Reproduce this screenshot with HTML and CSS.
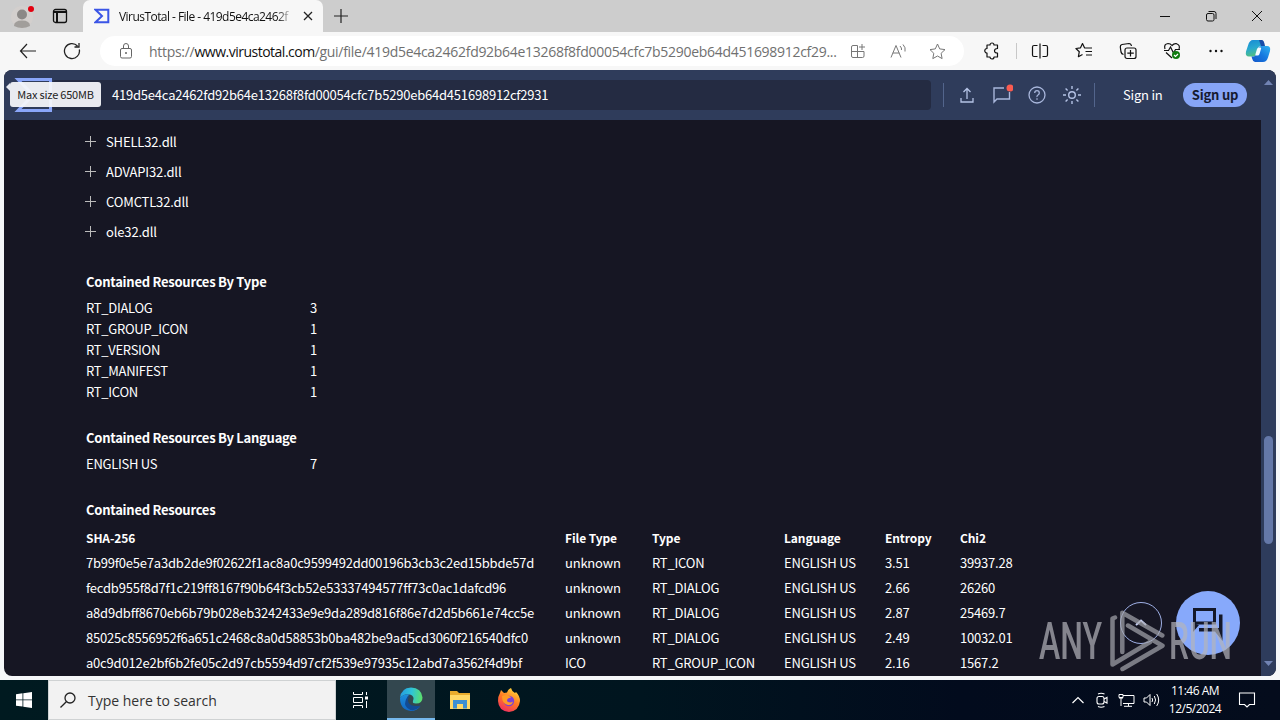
FILE: index.html
```html
<!DOCTYPE html>
<html lang="en">
<head>
    <meta charset="UTF-8">
    <meta name="viewport" content="width=device-width, initial-scale=1.0">
    <title>VirusTotal - File</title>
    <link rel="stylesheet" href="styles.css">
</head>
<body>

    <div class="tabbar">
        <div class="tab-tools">
            <svg class="profile" width="24" height="28" viewBox="0 0 24 28">
                <circle cx="12" cy="15" r="11" fill="#d3cfcd"/>
                <circle cx="12" cy="12.500" r="5" fill="#8b8886"/>
                <path d="M4 24q0-5.500 8-5.500t8 5.500q-8 4-16 0z" fill="#a19e9b"/>
                <circle cx="21" cy="7" r="3" fill="#e3000f"/>
            </svg>
            <svg width="16" height="16" viewBox="0 0 16 16" fill="none" stroke="#111" stroke-width="1.300">
                <rect x="1.500" y="1.500" width="13" height="13" rx="2"/>
                <path d="M1.500 4h13M5 4v10.500" stroke-width="2"/>
            </svg>
        </div>
        <div class="tab">
            <svg width="16" height="16" viewBox="0 0 16 16" fill="none" stroke="#3b55e6" stroke-width="2">
                <path d="M1.500 1.700h12.800v12.600H1.500L8 8z"/>
            </svg>
            <span class="tab-title">VirusTotal - File - 419d5e4ca2462f</span>
            <svg width="10" height="10" viewBox="0 0 10 10" stroke="#222" stroke-width="1.300"><path d="M1 1l8 8M9 1l-8 8"/></svg>
        </div>
        <svg class="new-tab" width="14" height="14" viewBox="0 0 14 14" stroke="#222" stroke-width="1.200"><path d="M7 0v14M0 7h14"/></svg>
        <div class="window-buttons">
            <svg width="12" height="12" viewBox="0 0 12 12" stroke="#111"><path d="M1 6.500h10"/></svg>
            <svg width="12" height="12" viewBox="0 0 12 12" fill="none" stroke="#111"><rect x="1.500" y="3.500" width="7.500" height="7.500" rx="1.500"/><path d="M3.500 1.500H9a2 2 0 0 1 2 2V9"/></svg>
            <svg width="12" height="12" viewBox="0 0 12 12" stroke="#111"><path d="M1 1l10 10M11 1L1 11"/></svg>
        </div>
    </div>

    <div class="toolbar">
        <svg class="back" width="18" height="16" viewBox="0 0 18 16" fill="none" stroke="#222" stroke-width="1.200"><path d="M17 8H1.500M8 1L1.500 8 8 15"/></svg>
        <svg class="reload" width="18" height="18" viewBox="0 0 18 18" fill="none" stroke="#222" stroke-width="1.300"><path d="M16.300 7.500A7.500 7.500 0 1 1 14.500 4M16 1v4h-4.500"/></svg>
        <div class="address">
            <svg width="14" height="18" viewBox="0 0 14 18" fill="none" stroke="#666"><rect x="1.500" y="6.500" width="11" height="9.500" rx="1.500"/><path d="M4.500 6.500V4a2.500 2.500 0 0 1 5 0v2.500"/><circle cx="7" cy="11" r=".6" fill="#666"/></svg>
            <span class="url">https://<b>www.virustotal.com</b>/gui/file/419d5e4ca2462fd92b64e13268f8fd00054cfc7b5290eb64d451698912cf29...</span>
            <svg class="apps" width="16" height="16" viewBox="0 0 16 16" fill="none" stroke="#777"><path d="M7.500 2.500H3A1.500 1.500 0 0 0 1.500 4v9A1.500 1.500 0 0 0 3 14.500h9.500A1.500 1.500 0 0 0 14 13V8.500H1.500M7.500 2.500v12M12 1v6M9 4h6"/></svg>
            <svg class="read" width="18" height="16" viewBox="0 0 18 16" fill="none" stroke="#777"><path d="M1 14.500L6 2.500l5 12M2.800 10h6.500M10 3q2 2 1.500 4M13 1.500q3 3 2 7"/></svg>
            <svg class="star" width="17" height="17" viewBox="0 0 17 17" fill="none" stroke="#777" stroke-linejoin="round"><path d="M8.500 1l2.200 4.900 5.300.7-3.900 3.700 1 5.300-4.600-2.600-4.700 2.600 1-5.300L1 6.600l5.300-.7z"/></svg>
        </div>
        <div class="toolbar-icons">
            <svg width="18" height="18" viewBox="0 0 18 18" fill="none" stroke="#111" stroke-width="1.200" stroke-linejoin="round"><path d="M4 3h3a2 2 0 0 1 4 0h3.500v3.500q-3 0-3 2.300t3 2.200v4H11a2 2 0 0 1-4 0H4v-4a2.200 2.200 0 1 1 0-4.500z"/></svg>
            <i class="divider"></i>
            <svg width="18" height="18" viewBox="0 0 18 18" fill="none" stroke="#111" stroke-width="1.200"><path d="M6.500 3.500H3a1.500 1.500 0 0 0-1.500 1.500v8A1.500 1.500 0 0 0 3 14.500h3.500M11.500 3.500H15a1.500 1.500 0 0 1 1.500 1.500v8a1.500 1.500 0 0 1-1.500 1.500h-3.500M9 1.500v15"/></svg>
            <svg width="18" height="18" viewBox="0 0 18 18" fill="none" stroke="#111" stroke-width="1.200" stroke-linejoin="round"><path d="M12 6L9.500 5.800 7.500 1.500l-2 4.300-4.600.7 3.400 3.200-.9 5L7.500 12.500M10.500 6H17M10.500 9.500H17M11 13h6"/></svg>
            <svg width="18" height="18" viewBox="0 0 18 18" fill="none" stroke="#111" stroke-width="1.200"><rect x="6" y="6" width="11" height="10.500" rx="2"/><path d="M11.500 8v6.500M8.300 11.200h6.500M4.500 12.500Q2.500 12 2 10L1.300 5q-.2-2 1.700-2.500l7-1q2 0 2.500 2.500"/></svg>
            <svg width="18" height="18" viewBox="0 0 18 18" fill="none" stroke="#111" stroke-width="1.200"><path d="M2 7q-1.500-5 3-5.500Q7.500 1.500 9 3.500 11 1.200 13.500 1.700 17.500 3 16 7M1 8.500h4.500l2-3.500 3 6 2-3.500H17M3 10.500l6 5.500"/><circle cx="13" cy="13" r="4" fill="#107c10" stroke="none"/><path d="M11 13l1.500 1.500L15 12" stroke="#fff"/></svg>
            <svg width="18" height="18" viewBox="0 0 18 18" fill="#111"><circle cx="3.500" cy="9" r="1.200"/><circle cx="9" cy="9" r="1.200"/><circle cx="14.500" cy="9" r="1.200"/></svg>
        </div>
        <svg class="copilot" width="26" height="24" viewBox="0 0 26 24">
            <defs>
                <linearGradient id="copilotLeft" x1="0" y1="0" x2=".3" y2="1"><stop offset="0" stop-color="#1689d5"/><stop offset=".55" stop-color="#28a9cf"/><stop offset="1" stop-color="#51bf83"/></linearGradient>
                <linearGradient id="copilotRight" x1="1" y1="0" x2="0" y2="1"><stop offset="0" stop-color="#2fb4f2"/><stop offset=".5" stop-color="#1678df"/><stop offset="1" stop-color="#1456c8"/></linearGradient>
            </defs>
            <path d="M8 1h8q2 0 2.700 3l.8 3h-4q-2 0-2.800 3l-1.500 5q-.8 2.500-3 2.500H4q-4 0-3-5l2-6Q4.500 1 8 1z" fill="url(#copilotLeft)"/>
            <path d="M18 23h-8q-2 0-2.700-3l-.8-2.500h2q2 0 2.800-3L13 9.500Q14 7 16 7h6q4 0 3 5l-2 6.500Q21.500 23 18 23z" fill="url(#copilotRight)"/>
            <path d="M14 8.500h1.500q1 0 .5 1.500l-1.500 5q-.5 1.500-2 1.500h-1.500q-1 0-.5-1.500l1.500-5q.5-1.500 2-1.500z" fill="#f4fbff"/>
            <path d="M14 1h3q2 0 3 6h-4z" fill="#174ca8"/>
        </svg>
    </div>

    <div class="page">
        <div class="main">
            <div class="vt-header">
                <svg class="vt-logo" width="38" height="34" viewBox="0 0 38 34" fill="none" stroke="#8aa6f9" stroke-width="3"><path d="M4 1.500h32.500v31H4L19 17z"/></svg>
                <div class="search">419d5e4ca2462fd92b64e13268f8fd00054cfc7b5290eb64d451698912cf2931</div>
                <div class="vt-actions">
                    <i class="divider"></i>
                    <svg width="20" height="20" viewBox="0 0 20 20" fill="none" stroke="#b5c3e6" stroke-width="1.300"><path d="M10 14V4M6.500 7L10 3.500 13.500 7M4 13v4h12v-4"/></svg>
                    <svg class="chat" width="22" height="22" viewBox="0 0 22 22" fill="none" stroke="#a8b6db" stroke-width="1.400"><path d="M13 4H3v14l3-3h12.500V8"/><circle cx="19" cy="4" r="3.500" fill="#fa5b50" stroke="none"/></svg>
                    <svg width="20" height="20" viewBox="0 0 20 20" fill="none" stroke="#a8b6db" stroke-width="1.300"><circle cx="10" cy="10" r="8"/><path d="M7.700 8q0-2.300 2.300-2.300T12.300 8q0 1.300-1.300 2t-1 2M10 13.200v1.500"/></svg>
                    <svg width="20" height="20" viewBox="0 0 20 20" fill="none" stroke="#b5c3e6" stroke-width="1.400"><circle cx="10" cy="10" r="3.300"/><path d="M10 1v3M10 16v3M1 10h3M16 10h3M3.600 3.600l2 2M14.400 14.400l2 2M16.400 3.600l-2 2M5.600 14.400l-2 2"/></svg>
                    <i class="divider last"></i>
                </div>
                <span class="sign-in">Sign in</span>
                <span class="sign-up">Sign up</span>
                <div class="tooltip">Max size 650MB</div>
            </div>

            <div class="content">
                <ul class="imports">
                    <li>SHELL32.dll</li>
                    <li>ADVAPI32.dll</li>
                    <li>COMCTL32.dll</li>
                    <li>ole32.dll</li>
                </ul>

                <h3>Contained Resources By Type</h3>
                <div class="counts">
                    <span>RT_DIALOG</span><span>3</span>
                    <span>RT_GROUP_ICON</span><span>1</span>
                    <span>RT_VERSION</span><span>1</span>
                    <span>RT_MANIFEST</span><span>1</span>
                    <span>RT_ICON</span><span>1</span>
                </div>

                <h3>Contained Resources By Language</h3>
                <div class="counts">
                    <span>ENGLISH US</span><span>7</span>
                </div>

                <h3>Contained Resources</h3>
                <table class="resources">
                    <tr><th class="c-hash">SHA-256</th><th class="c-file">File Type</th><th class="c-type">Type</th><th class="c-lang">Language</th><th class="c-entropy">Entropy</th><th>Chi2</th></tr>
                    <tr><td>7b99f0e5e7a3db2de9f02622f1ac8a0c9599492dd00196b3cb3c2ed15bbde57d</td><td>unknown</td><td>RT_ICON</td><td>ENGLISH US</td><td>3.51</td><td>39937.28</td></tr>
                    <tr><td>fecdb955f8d7f1c219ff8167f90b64f3cb52e53337494577ff73c0ac1dafcd96</td><td>unknown</td><td>RT_DIALOG</td><td>ENGLISH US</td><td>2.66</td><td>26260</td></tr>
                    <tr><td>a8d9dbff8670eb6b79b028eb3242433e9e9da289d816f86e7d2d5b661e74cc5e</td><td>unknown</td><td>RT_DIALOG</td><td>ENGLISH US</td><td>2.87</td><td>25469.7</td></tr>
                    <tr><td>85025c8556952f6a651c2468c8a0d58853b0ba482be9ad5cd3060f216540dfc0</td><td>unknown</td><td>RT_DIALOG</td><td>ENGLISH US</td><td>2.49</td><td>10032.01</td></tr>
                    <tr><td>a0c9d012e2bf6b2fe05c2d97cb5594d97cf2f539e97935c12abd7a3562f4d9bf</td><td>ICO</td><td>RT_GROUP_ICON</td><td>ENGLISH US</td><td>2.16</td><td>1567.2</td></tr>
                </table>
            </div>
        </div>
        <div class="scrollbar">
            <svg width="9" height="5" viewBox="0 0 9 5" fill="#7183b3"><path d="M0 5l4.500-5L9 5z"/></svg>
            <div class="thumb"></div>
            <svg width="9" height="5" viewBox="0 0 9 5" fill="#7183b3"><path d="M0 0l4.500 5L9 0z"/></svg>
        </div>
        <svg class="to-top" width="42" height="42" viewBox="0 0 42 42" fill="none" stroke="#9fb0e6"><circle cx="21" cy="21" r="20.500"/><path d="M16 23l5-4.500 5 4.500" stroke="#c5cff5" stroke-width="2"/></svg>
        <svg class="chat-button" width="64" height="64" viewBox="0 0 64 64" fill="none" stroke="#141829" stroke-width="3">
            <circle cx="32" cy="32" r="32" fill="#87a9fb" stroke="none"/>
            <path d="M18.500 18.500h20v13.500h-20z"/>
            <path d="M17 32v9l6-7zM43 23.500h3.500V50L39 40.500H23V37h20z" fill="#141829" stroke="none"/>
        </svg>
    </div>

    <div class="taskbar">
        <div class="start">
            <svg width="16" height="16" viewBox="0 0 16 16" fill="#fff"><path d="M0 2.300L6.500 1.300v6.200H0zM7.300 1.200L16 0v7.500H7.300zM0 8.300h6.500v6.300L0 13.700zM7.300 8.300H16V16l-8.700-1.200z"/></svg>
        </div>
        <div class="task-search">
            <svg width="16" height="16" viewBox="0 0 16 16" fill="none" stroke="#222" stroke-width="1.300"><circle cx="10" cy="6" r="5"/><path d="M6.300 9.700L.5 15.500"/></svg>
            Type here to search
        </div>
        <div class="task">
            <svg width="16" height="16" viewBox="0 0 16 16" fill="none" stroke="#fff"><path d="M1.500 0v2.500h9V0M1.500 16v-2.500h9V16M1.500 5.500h9v5h-9zM14.500 0v3M14.500 9v7"/><path d="M13 4.500h3v3h-3z" fill="#fff" stroke="none"/></svg>
        </div>
        <div class="task active">
            <svg width="24" height="24" viewBox="0 0 24 24">
                <defs>
                    <linearGradient id="edgeTop" x1="0" y1=".4" x2="1" y2=".5"><stop offset="0" stop-color="#259ce0"/><stop offset=".5" stop-color="#2fc4d8"/><stop offset="1" stop-color="#5ce06a"/></linearGradient>
                    <linearGradient id="edgeSide" x1="0" y1="0" x2="0" y2="1"><stop offset="0" stop-color="#1c8fdd"/><stop offset="1" stop-color="#1267c4"/></linearGradient>
                </defs>
                <path d="M1 11Q2 1 12 .5q10.500.5 11.500 10 0 6-6.500 6-4 0-3-2.500Q16 9 11 7.500 5 6 1 11z" fill="url(#edgeTop)"/>
                <path d="M1 11q4-5 10-3.500-3 1-3 5 0 8 9 8 3 0 4.500-1.500Q18 24 12 24 1 23 1 11z" fill="url(#edgeSide)"/>
                <path d="M11 8.500q-3 3-1.500 7 3 5 12 3-4 5.500-10 4.500-7-3-5-9 1-4.500 4.500-5.500z" fill="#124b94"/>
            </svg>
        </div>
        <div class="task">
            <svg width="22" height="20" viewBox="0 0 22 20"><path d="M1 1h7l2 2h11v16H1z" fill="#e9ac2d"/><path d="M1 5h20v14H1z" fill="#ffd866"/><path d="M4 10h14v8.500h-4V14H8v4.500H4z" fill="#3d8fd1"/></svg>
        </div>
        <div class="task">
            <svg width="24" height="24" viewBox="0 0 24 24">
                <defs><linearGradient id="fox" x1=".8" y1="0" x2=".3" y2="1"><stop offset="0" stop-color="#ffe03c"/><stop offset=".5" stop-color="#ff7a24"/><stop offset="1" stop-color="#f02e60"/></linearGradient></defs>
                <path d="M3 5l1-3 3 3 3-.5Q11 1 14 0q.5 3 4 5l1-1q4 4 4 9-1 10-11 11Q1.500 23 1 13q0-5 2-8z" fill="url(#fox)"/>
                <circle cx="12" cy="13" r="5.200" fill="#7a41d8"/>
                <path d="M5 8q4-2 7 0 2 .5 2 1.500l-3 1q-2 2 0 3.500 3 1 5-.5-1 4-5 3.500-6-1-6-9z" fill="#ff9b25"/>
            </svg>
        </div>
        <div class="tray">
            <svg width="12" height="8" viewBox="0 0 12 8" fill="none" stroke="#fff" stroke-width="1.200"><path d="M.5 7L6 1.500 11.500 7"/></svg>
            <svg class="meet" width="14" height="16" viewBox="0 0 14 16" fill="none" stroke="#fff" stroke-width="1.100"><rect x="2" y="4.500" width="7" height="7.500" rx="2"/><path d="M9 7l3-1.500v5.500L9 9.500M3 2Q6 .5 9.500 2M3 14.500q3 1.500 6.500 0"/></svg>
            <svg width="17" height="14" viewBox="0 0 17 14" fill="none" stroke="#fff"><path d="M5 2.500h11v8H5M3 1.500H1v3h4v-3H3M3 4.500v8.500M10.500 10.500V13M6 13.300h8M1 5h4"/></svg>
            <svg width="18" height="14" viewBox="0 0 18 14" fill="none" stroke="#fff"><path d="M1 5h2.500L7 1.500v11L3.500 9H1zM9 5q1.300 2 0 4M11.300 3q2.500 4 0 8M13.700 1q4 6 0 12"/></svg>
        </div>
        <div class="clock">11:46 AM<br>12/5/2024</div>
        <svg class="notes" width="18" height="18" viewBox="0 0 18 18" fill="none" stroke="#fff" stroke-width="1.100"><path d="M1.500 2h15v11.500h-5L9 16l-2.500-2.500h-5z"/></svg>
    </div>

    <!-- recorder watermark, lies over page and chat button -->
    <svg class="watermark" width="200" height="66" viewBox="0 0 200 66">
        <g class="watermark-text">
            <text x="3" y="53" textLength="63" lengthAdjust="spacingAndGlyphs">ANY</text>
            <text x="133" y="53" textLength="63" lengthAdjust="spacingAndGlyphs">RUN</text>
        </g>
        <g fill="none" stroke="#a5a6ad" stroke-width="4.500" stroke-linejoin="round" stroke-linecap="round">
            <path d="M79 11.500l-2.500 1v46l37.500-22.500M86.300 46V6.700l40 22.800M92 19.500l34.500 20.200-40 23.300"/>
        </g>
    </svg>

</body>
</html>
```
FILE: styles.css
```css
* {
    box-sizing: border-box;
}

body {
    margin: 0;
    width: 1280px;
    height: 720px;
    overflow: hidden;
    display: flex;
    flex-direction: column;
    position: relative;
    background-color: #f5f7f9;
    font-family: "Noto Sans CJK SC", "Noto Sans", sans-serif;
}

svg {
    display: block;
    flex: none;
}

/* browser tabs */
.tabbar {
    height: 32px;
    flex: none;
    display: flex;
    align-items: center;
    background-color: #cdcdcd;
    font-family: "Open Sans", sans-serif;
}

.tab-tools {
    width: 83px;
    display: flex;
    align-items: center;
    gap: 18px;
    padding-left: 10px;
}

.tab {
    width: 240px;
    height: 32px;
    display: flex;
    align-items: center;
    padding: 0 10px 0 11px;
    background-color: #f7f7f7;
    border-radius: 7px 7px 0 0;
}

.tab-title {
    width: 175px;
    flex: none;
    margin: 0 9px;
    white-space: nowrap;
    font-size: 12px;
    color: #111;
    letter-spacing: -0.55px;
    -webkit-mask-image: linear-gradient(to right, #000 90%, transparent);
}

.new-tab {
    margin-left: 11px;
}

.window-buttons {
    display: flex;
    gap: 34px;
    margin-left: auto;
    padding-right: 17px;
}

/* address bar */
.toolbar {
    height: 38px;
    flex: none;
    display: flex;
    align-items: center;
    padding-left: 19px;
    background-color: #f7f7f7;
    font-family: "Open Sans", sans-serif;
}

.reload {
    margin-left: 26px;
}

.address {
    width: 864px;
    height: 30px;
    display: flex;
    align-items: center;
    margin-left: 19px;
    padding-left: 19px;
    background-color: #fff;
    border-radius: 15px;
}

.url {
    width: 692px;
    margin-left: 16px;
    white-space: nowrap;
    font-size: 14px;
    letter-spacing: -0.29px;
    color: #707070;
}

.url b {
    font-weight: normal;
    letter-spacing: -0.5px;
    color: #111;
}

.apps {
    margin-left: 9px;
}

.read {
    margin-left: 24px;
}

.star {
    margin-left: 21px;
}

.toolbar-icons {
    display: flex;
    align-items: center;
    gap: 26px;
    margin-left: 19px;
}

.toolbar-icons .divider {
    width: 1px;
    height: 16px;
    margin: 0 -12px 0 -11px;
    background-color: #c8c8c8;
}

.copilot {
    margin-left: 20px;
}

/* web page */
.page {
    height: 606px;
    flex: none;
    display: flex;
    position: relative;
    margin: 0 4px 4px;
    border-radius: 8px;
    overflow: hidden;
    background-color: #161623;
    color: #fff;
}

.main {
    width: 1257px;
}

.vt-header {
    height: 50px;
    display: flex;
    align-items: center;
    position: relative;
    padding-left: 10px;
    background-color: #2f3c5b;
}

.search {
    width: 879px;
    height: 30px;
    padding-left: 60px;
    line-height: 30px;
    background-color: #242b42;
    border-radius: 4px;
    font-size: 13px;
    letter-spacing: -0.21px;
}

.vt-actions {
    display: flex;
    align-items: center;
    gap: 15px;
    margin-left: 12px;
}

.vt-actions .divider {
    width: 1px;
    height: 24px;
    margin-right: -2px;
    background-color: #53658c;
}

.vt-actions .last {
    margin: 0 0 0 -3px;
}

.vt-actions .chat {
    margin: 0 -1px;
}

.sign-in {
    margin-left: 28px;
    width: 60px;
    font-size: 13px;
    line-height: 20px;
    letter-spacing: -0.2px;
}

.sign-up {
    width: 64px;
    height: 24px;
    line-height: 24px;
    border-radius: 12px;
    text-align: center;
    background-color: #87a5f7;
    color: #161a30;
    font-size: 13px;
    font-weight: bold;
    letter-spacing: -0.2px;
}

.tooltip {
    position: absolute;
    left: 6px;
    top: 12px;
    width: 91px;
    height: 25px;
    border-radius: 3px;
    line-height: 25px;
    text-align: center;
    white-space: nowrap;
    background-color: rgba(245, 246, 250, 0.94);
    color: #222;
    font-size: 11px;
    letter-spacing: -0.2px;
}

.tooltip::before {
    content: "";
    position: absolute;
    left: -4px;
    top: 1px;
    border: 4px solid transparent;
    border-left: 0;
    border-right-color: #e7eaf2;
}

.content {
    padding: 6px 0 0 82px;
    font-size: 13px;
    letter-spacing: -0.21px;
}

.imports {
    margin: 0;
    padding: 0;
    list-style: none;
}

.imports li {
    height: 30px;
    display: flex;
    align-items: center;
    gap: 10px;
    margin-left: -1px;
    letter-spacing: -0.15px;
}

.imports li::before {
    content: "";
    width: 11px;
    height: 11px;
    background: linear-gradient(#bbb, #bbb) 50% 50% / 11px 1px no-repeat,
        linear-gradient(#bbb, #bbb) 50% 50% / 1px 11px no-repeat;
}

h3 {
    height: 21px;
    line-height: 21px;
    margin: 25px 0 5px;
    font-size: 13px;
    font-weight: bold;
    letter-spacing: -0.25px;
}

.counts {
    display: grid;
    grid-template-columns: 224px 20px;
    line-height: 21px;
    letter-spacing: -0.28px;
}

.resources {
    border-collapse: collapse;
    table-layout: fixed;
    width: 975px;
    white-space: nowrap;
}

.resources th,
.resources td {
    height: 25px;
    padding: 0;
    line-height: 25px;
    text-align: left;
}

.resources th {
    font-size: 12px;
    letter-spacing: -0.1px;
}

.c-hash {
    width: 479px;
}

.c-file {
    width: 87px;
}

.c-type {
    width: 132px;
}

.c-lang {
    width: 101px;
}

.c-entropy {
    width: 75px;
}

.scrollbar {
    width: 15px;
    display: flex;
    flex-direction: column;
    align-items: center;
    padding: 10px 0;
    background-color: #2e3c5c;
}

.thumb {
    width: 9px;
    height: 108px;
    margin: 351px 0 auto;
    border-radius: 5px;
    background-color: #6478a8;
}

.to-top {
    position: absolute;
    left: 1116px;
    top: 532px;
}

.chat-button {
    position: absolute;
    left: 1172px;
    top: 521px;
}

/* windows taskbar */
.taskbar {
    height: 40px;
    flex: none;
    display: flex;
    align-items: center;
    background: linear-gradient(to right, #001a20, #00151f 50%, #020b1d 75%, #040c1c);
    color: #fff;
    font-family: "Open Sans", sans-serif;
}

.start {
    width: 48px;
    display: flex;
    justify-content: center;
}

.task-search {
    width: 288px;
    height: 40px;
    display: flex;
    align-items: center;
    gap: 12px;
    padding-left: 11px;
    border: 1px solid #cfd2d3;
    background-color: #f2f2f2;
    color: #333;
    font-size: 14px;
}

.task {
    width: 48px;
    height: 40px;
    display: flex;
    align-items: center;
    justify-content: center;
}

.task + .task {
    margin-left: 1px;
}

.task-search + .task + .active {
    margin-left: 3px;
}

.active {
    background-color: #33474f;
    border-bottom: 2px solid #76b9ed;
}

.tray {
    display: flex;
    align-items: center;
    gap: 8px;
    margin-left: auto;
    margin-right: -1px;
}

.meet {
    margin: 0 1px 0 3px;
}

.clock {
    width: 70px;
    text-align: center;
    font-size: 12px;
    line-height: 18px;
    letter-spacing: -0.5px;
}

.notes {
    margin: 0 24px 0 8px;
}

.watermark {
    position: absolute;
    left: 1036px;
    top: 606px;
    opacity: 0.7;
}

.watermark-text {
    font-family: Roboto, sans-serif;
    font-size: 51px;
    font-weight: 500;
    fill: #b4b5bc;
}
```
